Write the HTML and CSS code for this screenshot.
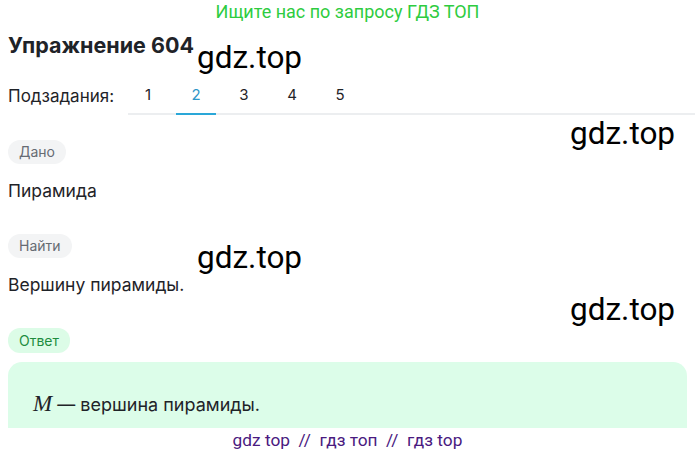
FILE: index.html
```html
<!DOCTYPE html>
<html lang="ru">
<head>
  <meta charset="UTF-8">
  <meta name="viewport" content="width=device-width, initial-scale=1">
  <title>Упражнение 604</title>
  <link rel="stylesheet" href="styles.css">
</head>
<body>

<div class="banner">Ищите нас по запросу ГДЗ ТОП</div>

<h1 class="title">Упражнение 604</h1>

<div class="subtasks">
  <span class="subtasks-label">Подзадания:</span>
  <div class="tabs">
    <span class="tab">1</span>
    <span class="tab active">2</span>
    <span class="tab">3</span>
    <span class="tab">4</span>
    <span class="tab">5</span>
  </div>
</div>

<section class="block">
  <span class="pill">Дано</span>
  <p class="text">Пирамида</p>
</section>

<section class="block">
  <span class="pill">Найти</span>
  <p class="text">Вершину пирамиды.</p>
</section>

<section class="block">
  <span class="pill pill-answer">Ответ</span>
  <div class="answer">
    <p><span class="math">M</span> — вершина пирамиды.</p>
  </div>
</section>

<span class="mark mark-1">gdz.top</span>
<span class="mark mark-2">gdz.top</span>
<span class="mark mark-3">gdz.top</span>
<span class="mark mark-4">gdz.top</span>

<footer class="footer">gdz top &nbsp;//&nbsp; гдз топ &nbsp;//&nbsp; гдз top</footer>

</body>
</html>
```

FILE: styles.css
```css
body {
  font-family: Inter, Roboto, sans-serif;
  margin: 0;
  padding: 0;
  background: #fff;
  color: #1f2328;
}
.banner {
  height: 24px;
  line-height: 24px;
  text-align: center;
  font-family: Roboto, sans-serif;
  font-size: 18px;
  color: #2ecc40;
}
.title {
  margin: 7px 8px 0;
  font-size: 21.5px;
  line-height: 28px;
  font-weight: 700;
}
.subtasks {
  display: flex;
  align-items: stretch;
  margin-top: 17px;
  padding-left: 8px;
}
.subtasks-label {
  display: flex;
  align-items: center;
  width: 120px;
  font-size: 17px;
}
.tabs {
  flex: 1;
  display: flex;
  gap: 8px;
  border-bottom: 2px solid #eceef0;
}
.tab {
  width: 40px;
  height: 37px;
  display: flex;
  align-items: center;
  justify-content: center;
  font-size: 15px;
  margin-bottom: -2px;
  border-bottom: 2px solid transparent;
}
.tab.active {
  color: #2f96c8;
  border-bottom-color: #2aa7d8;
}
.block {
  padding: 0 8px;
}
.pill {
  display: inline-block;
  margin-top: 25px;
  height: 24px;
  line-height: 24px;
  padding: 0 11px;
  border-radius: 12px;
  font-size: 14px;
  color: #666b73;
  background: #f3f4f5;
}
.text {
  margin: 15px 0 0;
  font-size: 17.5px;
  line-height: 24px;
}
.block + .block .pill {
  margin-top: 31px;
}
.pill-answer {
  height: 25px;
  line-height: 25px;
  color: #1e8c3e;
  background: #dcfce7;
}
.answer {
  margin-top: 9px;
  padding: 30px 25px 40px;
  background: #dcfde9;
  border-radius: 14px;
}
.answer p {
  margin: 0;
  font-size: 18px;
  line-height: 24px;
}
.math {
  font-family: "Liberation Serif", serif;
  font-style: italic;
  font-size: 23px;
}
.mark {
  position: absolute;
  font-family: Roboto, sans-serif;
  font-size: 31.5px;
  color: #000;
}
.mark-1 { left: 197px; top: 39px; }
.mark-2 { left: 570px; top: 115px; }
.mark-3 { left: 197px; top: 239px; }
.mark-4 { left: 570px; top: 291px; }
.footer {
  position: fixed;
  left: 0;
  bottom: 0;
  width: 100%;
  height: 28px;
  line-height: 24px;
  text-align: center;
  font-family: Roboto, sans-serif;
  font-size: 17.3px;
  color: #4a1a80;
  background: #fff;
}
```
